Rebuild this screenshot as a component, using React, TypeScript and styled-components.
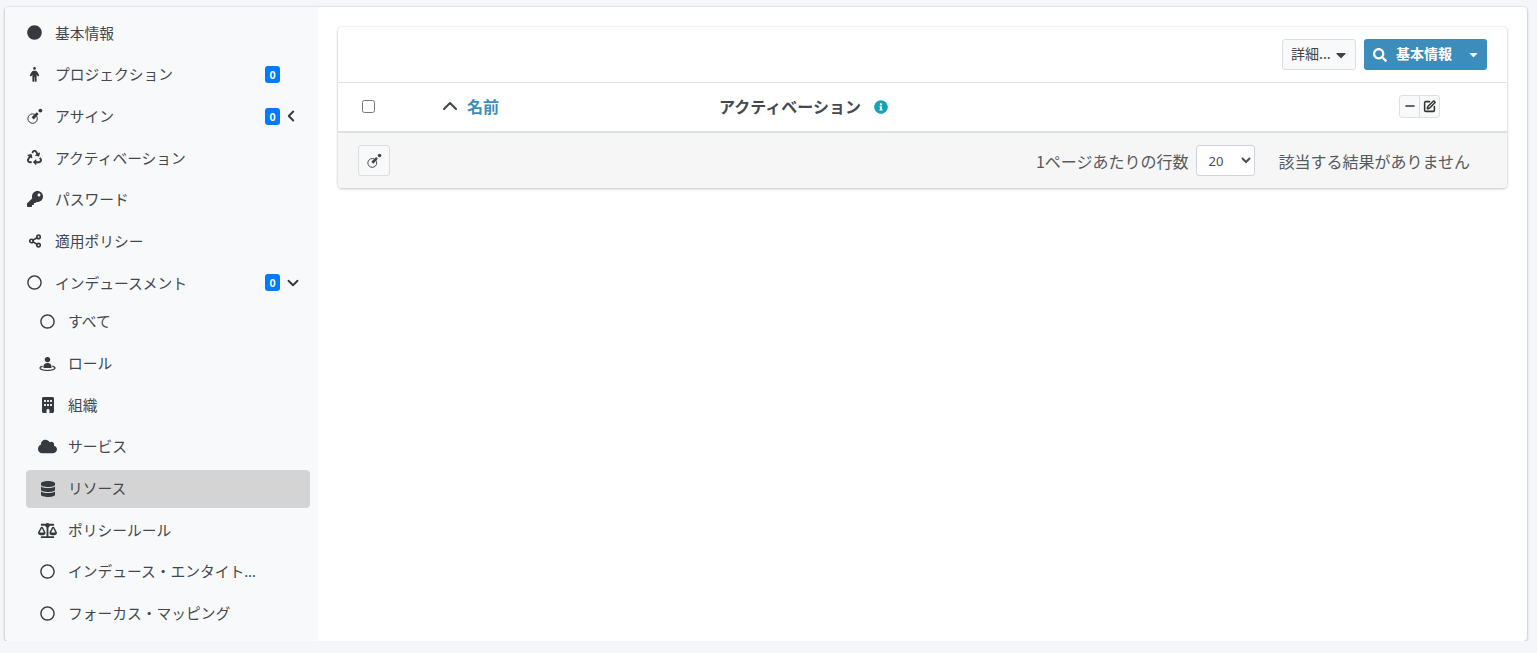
import React from 'react';
import styled, { createGlobalStyle } from 'styled-components';
import {
  FaBalanceScale, FaCaretDown, FaCircle, FaCloud,
  FaDatabase, FaInfoCircle, FaKey, FaRecycle, FaRegCircle, FaSearch,
} from 'react-icons/fa';
import { FaBuilding, FaPerson } from 'react-icons/fa6';
import { ChevronDown, ChevronLeft, ChevronUp, Minus, Share2, SquarePen } from 'lucide-react';

const FONT = '"Noto Sans CJK JP", "Noto Sans", sans-serif';

const Global = createGlobalStyle`
  html, body { margin: 0; padding: 0; background: #f4f6f9; }
  body { font-family: ${FONT}; color: #495057; }
  * { box-sizing: border-box; }
`;

const Card = styled.div`
  display: flex;
  width: 1522px;
  height: 634px;
  margin: 7px 0 0 5px;
  background: #fff;
  border-radius: 4px;
  overflow: hidden;
  box-shadow: 0 0 2px rgba(0, 0, 0, 0.14), 0 1px 3px rgba(0, 0, 0, 0.25);
`;

const Sidebar = styled.nav`
  flex: 0 0 313px;
  padding: 6.8px 8px 0 21px;
  background: #f8f9fb;
`;

const Item = styled.div<{ $sub?: boolean; $active?: boolean; $tight?: boolean }>`
  display: flex;
  align-items: center;
  height: 38px;
  margin-bottom: ${(p) => (p.$tight ? '1.7px' : '3.67px')};
  padding-left: ${(p) => (p.$sub ? '14px' : '1px')};
  border-radius: 4px;
  background: ${(p) => (p.$active ? '#d4d4d4' : 'transparent')};
  color: #43484e;
  font-family: "Noto Sans", "Noto Sans CJK JP", sans-serif;
  font-size: 14.75px;
`;

const IconSlot = styled.span<{ $sub?: boolean }>`
  flex: 0 0 15px;
  min-width: 0;
  margin-right: 13px;
  margin-top: ${(p) => (p.$sub ? '-1px' : '0')};
  display: flex;
  justify-content: center;
  color: #343a40;
  svg { display: block; flex-shrink: 0; }
`;

const Label = styled.span<{ $sub?: boolean }>`
  flex: 1;
  white-space: nowrap;
  margin-top: ${(p) => (p.$sub ? '-3px' : '-1px')};
`;

const Badge = styled.span`
  width: 15px;
  height: 17px;
  margin-right: 8px;
  background: #007bff;
  border-radius: 3px;
  color: #fff;
  font: 700 10.5px/17px ${FONT};
  text-align: center;
`;

const Chevron = styled.span<{ $shift: number }>`
  flex: 0 0 22px;
  display: flex;
  justify-content: flex-start;
  color: #343a40;
  svg { display: block; margin-left: ${(p) => p.$shift}px; }
`;

const Main = styled.main`
  flex: 1;
  padding: 20px 20px 0;
`;

const Panel = styled.section`
  height: 161px;
  background: #fff;
  border-radius: 4px;
  overflow: hidden;
  box-shadow: 0 0 2px rgba(0, 0, 0, 0.12), 0 1px 3px rgba(0, 0, 0, 0.2);
`;

const Toolbar = styled.div`
  display: flex;
  justify-content: flex-end;
  gap: 8px;
  height: 56px;
  padding: 12px 20px 0 0;
  border-bottom: 1px solid #dee2e6;
`;

const DetailButton = styled.button`
  display: flex;
  align-items: center;
  justify-content: space-between;
  width: 74px;
  height: 31px;
  padding: 0 6px 3px 8px;
  background: #f8f9fa;
  border: 1px solid #ddd;
  border-radius: 3px;
  color: #444;
  font: 400 14px ${FONT};
  svg { margin-top: 3px; }
`;

const SearchButton = styled.button`
  display: flex;
  align-items: center;
  width: 123px;
  height: 31px;
  padding: 0 7px 3px 9px;
  background: #3c8dbc;
  border: 0;
  border-radius: 3px;
  color: #fff;
  font: 700 14px ${FONT};
  span { flex: 1; text-align: left; margin-left: 9px; }
  svg { margin-top: 3px; }
`;

const HeaderRow = styled.div`
  display: grid;
  grid-template-columns: 104px 277px 680px 1fr;
  align-items: center;
  height: 50px;
  border-bottom: 2px solid #dee2e6;
  font-size: 16px;
  font-weight: 700;
  color: #444a50;
`;

const CheckCell = styled.div`
  padding-left: 24px;
  display: flex;
  margin-top: -2px;
  input { margin: 0; width: 13px; height: 13px; }
`;

const NameCell = styled.div`
  display: flex;
  align-items: center;
  gap: 5px;
  margin-top: -2px;
  margin-left: -4px;
  a { color: #3c8dbc; text-decoration: none; }
  svg { display: block; }
`;

const ActivationCell = styled.div`
  display: flex;
  align-items: center;
  gap: 12px;
  margin-top: -2px;
  svg { color: #17a2b8; display: block; margin: 2px 0 0 1px; }
`;

const ToolGroup = styled.div`
  display: flex;
  width: 41px;
  height: 23px;
  border: 1px solid #e0e0e0;
  border-radius: 3px;
  background: #f8f9fa;
  margin-top: -2px;
`;

const ToolBtn = styled.span`
  flex: 1;
  display: flex;
  align-items: center;
  justify-content: center;
  color: #333;
  & + & { border-left: 1px solid #ddd; }
`;

const Footer = styled.div`
  display: flex;
  align-items: center;
  height: 55px;
  padding: 0 37px 0 20px;
  background: #f6f6f6;
  font-size: 16px;
`;

const AssignButton = styled.button`
  display: flex;
  align-items: center;
  justify-content: center;
  width: 32px;
  height: 31px;
  padding: 0;
  margin-right: auto;
  background: #f8f9fa;
  border: 1px solid #ddd;
  border-radius: 3px;
  color: #444;
`;

const PerPage = styled.span`
  margin-right: 8px;
  color: #555a60;
`;

const Select = styled.select`
  width: 59px;
  height: 31px;
  padding: 0 4px 0 7px;
  background: #fff;
  border: 1px solid #ced4da;
  border-radius: 3px;
  color: #495057;
  font: 400 13px "Noto Sans", sans-serif;
`;

const Result = styled.span`
  margin-left: 23px;
  color: #555a60;
`;

const AssignIcon = ({ size = 16 }: { size?: number }) => (
  <svg width={size} height={size} viewBox="0 0 16 16" fill="none">
    <circle cx="5.6" cy="10.6" r="4.7" stroke="currentColor" strokeWidth="1" />
    <path d="M4.6 9.2L9.8 4.2L11.6 6L6.8 11.4Z" fill="currentColor" />
    <circle cx="13.4" cy="2.6" r="1.9" fill="currentColor" />
  </svg>
);

const RoleIcon = () => (
  <svg width="17" height="16" viewBox="0 0 17 16" fill="currentColor">
    <circle cx="8.5" cy="3.6" r="2.7" />
    <path d="M4.4 11.4C4.4 8.2 6 7 8.5 7s4.1 1.2 4.1 4.4c0 .4-.3.6-.6.6H5c-.3 0-.6-.2-.6-.6Z" />
    <path d="M3.6 9.6C1.4 10.2.4 11 .4 12c0 1.8 3.6 3.1 8.1 3.1s8.1-1.3 8.1-3.1c0-1-1-1.8-3.2-2.4l-.1 1.3c1.3.3 2 .7 2 1.1 0 .9-3 1.9-6.8 1.9s-6.8-1-6.8-1.9c0-.4.7-.8 2-1.1Z" />
  </svg>
);

type Row = { icon: React.ReactNode; text: string; badge?: boolean; chevron?: React.ReactNode; shift?: number; sub?: boolean; active?: boolean; tight?: boolean };

const rows: Row[] = [
  { icon: <FaCircle size={15} />, text: '基本情報' },
  { icon: <FaPerson size={15} />, text: 'プロジェクション', badge: true },
  { icon: <AssignIcon />, text: 'アサイン', badge: true, chevron: <ChevronLeft size={18} strokeWidth={2.5} />, shift: -6 },
  { icon: <FaRecycle size={15} />, text: 'アクティベーション' },
  { icon: <FaKey size={16} />, text: 'パスワード' },
  { icon: <Share2 size={14} strokeWidth={2.8} />, text: '適用ポリシー' },
  { icon: <FaRegCircle size={15} />, text: 'インデュースメント', badge: true, chevron: <ChevronDown size={18} strokeWidth={2.5} />, shift: -4, tight: true },
  { icon: <FaRegCircle size={15} />, text: 'すべて', sub: true },
  { icon: <RoleIcon />, text: 'ロール', sub: true },
  { icon: <FaBuilding size={16} />, text: '組織', sub: true },
  { icon: <FaCloud size={19} />, text: 'サービス', sub: true },
  { icon: <FaDatabase size={16} />, text: 'リソース', sub: true, active: true },
  { icon: <FaBalanceScale size={19} />, text: 'ポリシールール', sub: true },
  { icon: <FaRegCircle size={15} />, text: 'インデュース・エンタイト…', sub: true },
  { icon: <FaRegCircle size={15} />, text: 'フォーカス・マッピング', sub: true },
];

export default function App() {
  return (
    <>
      <Global />
      <Card>
        <Sidebar>
          {rows.map((r) => (
            <Item key={r.text} $sub={r.sub} $active={r.active} $tight={r.tight}>
              <IconSlot $sub={r.sub}>{r.icon}</IconSlot>
              <Label $sub={r.sub}>{r.text}</Label>
              {r.badge && <Badge>0</Badge>}
              {r.badge && <Chevron $shift={r.shift ?? 0}>{r.chevron}</Chevron>}
            </Item>
          ))}
        </Sidebar>
        <Main>
          <Panel>
            <Toolbar>
              <DetailButton>詳細... <FaCaretDown size={16} /></DetailButton>
              <SearchButton><FaSearch size={14} /><span>基本情報</span><FaCaretDown size={13} /></SearchButton>
            </Toolbar>
            <HeaderRow>
              <CheckCell><input type="checkbox" /></CheckCell>
              <NameCell><ChevronUp size={24} strokeWidth={2.2} /><a href="#name">名前</a></NameCell>
              <ActivationCell>アクティベーション<FaInfoCircle size={14} /></ActivationCell>
              <ToolGroup>
                <ToolBtn><Minus size={14} strokeWidth={2.2} /></ToolBtn>
                <ToolBtn><SquarePen size={13} strokeWidth={2.8} /></ToolBtn>
              </ToolGroup>
            </HeaderRow>
            <Footer>
              <AssignButton><AssignIcon size={15} /></AssignButton>
              <PerPage>1ページあたりの行数</PerPage>
              <Select defaultValue="20">
                <option>10</option>
                <option>20</option>
                <option>50</option>
              </Select>
              <Result>該当する結果がありません</Result>
            </Footer>
          </Panel>
        </Main>
      </Card>
    </>
  );
}
